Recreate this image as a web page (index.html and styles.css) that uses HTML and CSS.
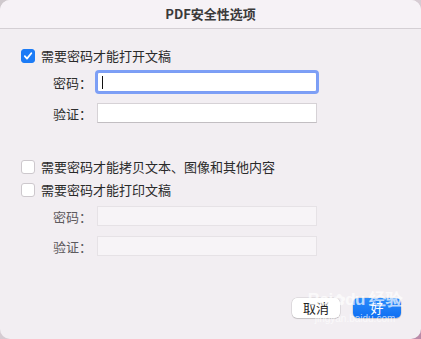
FILE: index.html
```html
<!DOCTYPE html>
<html lang="zh">
<head>
  <meta charset="UTF-8" />
  <meta name="viewport" content="width=device-width, initial-scale=1.0"/>
  <title>PDF安全性选项</title>
  <link rel="stylesheet" href="styles.css">
</head>
<body>

  <div class="window">
    <div class="titlebar">PDF安全性选项</div>

    <div class="content">
      <label class="check-row">
        <span class="box checked">
          <svg width="10" height="10" viewBox="0 0 10 10"><path d="M1.8 5.2 L4 7.6 L8.3 2.2" fill="none" stroke="#fff" stroke-width="1.8" stroke-linecap="round" stroke-linejoin="round"/></svg>
        </span>
        需要密码才能打开文稿
      </label>

      <div class="field-row first">
        <span class="field-label">密码：</span>
        <span class="field focused"><span class="caret"></span></span>
      </div>
      <div class="field-row">
        <span class="field-label">验证：</span>
        <span class="field"></span>
      </div>

      <label class="check-row gap-top">
        <span class="box"></span>
        需要密码才能拷贝文本、图像和其他内容
      </label>
      <label class="check-row">
        <span class="box"></span>
        需要密码才能打印文稿
      </label>

      <div class="field-row small">
        <span class="field-label dim">密码：</span>
        <span class="field disabled"></span>
      </div>
      <div class="field-row small">
        <span class="field-label dim">验证：</span>
        <span class="field disabled"></span>
      </div>
    </div>

    <div class="buttons">
      <button class="btn">取消</button>
      <button class="btn primary">好</button>
    </div>

    <div class="watermark">
      <span class="wm-logo">Bai<span class="paw">&#10047;</span>du 经验</span>
      <span class="wm-url">jingyan.baidu.com</span>
    </div>
  </div>

</body>
</html>
```

FILE: styles.css
```css
* {
  box-sizing: border-box;
}
body {
  margin: 0;
  padding: 0;
  width: 421px;
  height: 339px;
  background: linear-gradient(135deg, #cfc9cd 0%, #d9cdd5 70%, #b98aa8 100%);
  font-family: "Noto Sans CJK SC", "Noto Sans", sans-serif;
  color: #2a2a2a;
  overflow: hidden;
}

.window {
  position: relative;
  width: 421px;
  height: 339px;
  background-color: #f2eef2;
  border-radius: 10px;
  overflow: hidden;
  display: flex;
  flex-direction: column;
}

.titlebar {
  height: 29px;
  background-color: #f6f2f6;
  border-bottom: 1px solid #d4cfd4;
  text-align: center;
  font-size: 13px;
  font-weight: 700;
  line-height: 28px;
  color: #3a3a3a;
}

.content {
  padding: 20px 0 0 21px;
}

.check-row {
  display: flex;
  align-items: center;
  gap: 6px;
  height: 14px;
  font-size: 13px;
  line-height: 14px;
  margin-bottom: 9px;
}
.check-row.gap-top {
  margin-top: 37px;
}

.box {
  width: 14px;
  height: 14px;
  border-radius: 3px;
  background: #fff;
  border: 1px solid #cdc8cd;
  display: flex;
  align-items: center;
  justify-content: center;
}
.box.checked {
  background: #1c7bf6;
  border-color: #1c7bf6;
}

.field-row {
  display: flex;
  align-items: center;
  height: 20px;
  margin-bottom: 11px;
}
.field-row.first {
  margin-top: 9px;
}
.field-row.small {
  margin-bottom: 10px;
}

.field-label {
  width: 71px;
  text-align: right;
  font-size: 13px;
  color: #2e2e2e;
  margin-right: 5px;
}
.field-label.dim {
  color: #5e5a5e;
}

.field {
  position: relative;
  width: 220px;
  height: 20px;
  background: #fff;
  border: 1px solid #d6d2d6;
  border-bottom-color: #c2bec2;
}
.field.focused {
  border-color: #7b9df4;
  box-shadow: 0 0 0 2px #7d9ff6;
  border-radius: 2px;
}
.field.disabled {
  background: #f7f4f7;
  border-color: #e6e2e6;
}
.caret {
  position: absolute;
  left: 4px;
  top: 3px;
  width: 1px;
  height: 13px;
  background: #111;
}

.buttons {
  margin-top: auto;
  display: flex;
  justify-content: flex-end;
  gap: 13px;
  padding: 0 20px 21px 0;
}

.btn {
  width: 48px;
  height: 20px;
  font-family: "Noto Sans CJK SC", sans-serif;
  font-size: 13px;
  line-height: 18px;
  padding: 0;
  border: none;
  border-radius: 5px;
  background: #fff;
  color: #222;
  box-shadow: 0 0 0 0.5px rgba(0, 0, 0, 0.15), 0 1px 1px rgba(0, 0, 0, 0.12);
}
.btn.primary {
  background: linear-gradient(#2a8bfb, #0f6ff2);
  color: #fff;
}

.watermark {
  position: absolute;
  left: 300px;
  top: 290px;
  width: 110px;
  display: flex;
  flex-direction: column;
  align-items: center;
  color: rgba(255, 255, 255, 0.7);
  pointer-events: none;
}
.wm-logo {
  font-family: "Liberation Sans", sans-serif;
  font-size: 17px;
  font-weight: 700;
  letter-spacing: -0.5px;
  line-height: 20px;
}
.paw {
  font-size: 15px;
}
.wm-url {
  font-family: "Liberation Sans", sans-serif;
  font-size: 10px;
  line-height: 14px;
  margin-top: 2px;
}
```
